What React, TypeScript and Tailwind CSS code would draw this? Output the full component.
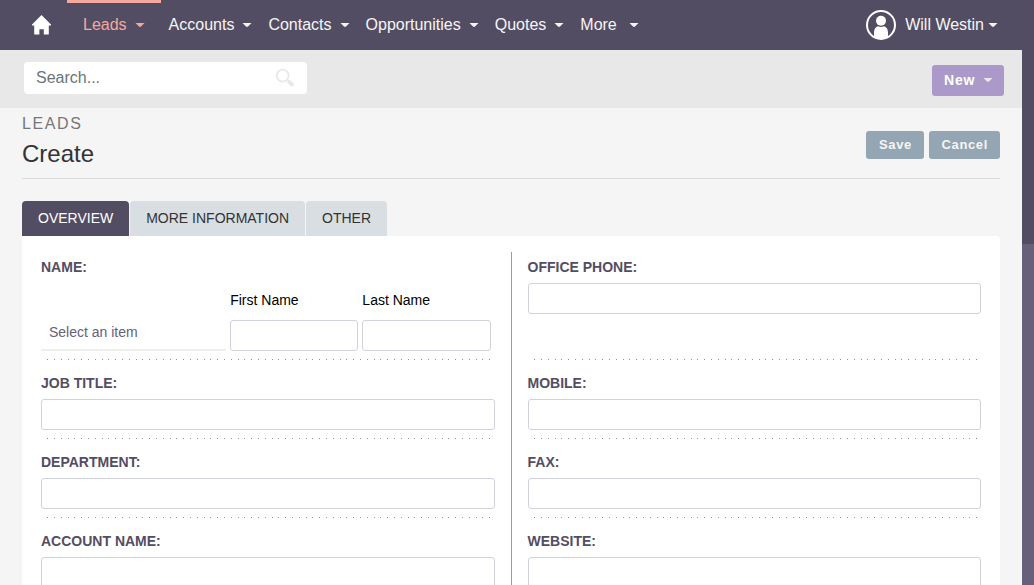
import React from "react";

const FONT = "font-['Liberation_Sans',Arial,sans-serif]";

function Caret() {
  return (
    <svg viewBox="0 0 10 4" className="h-1 w-[10px] shrink-0" fill="currentColor" aria-hidden="true">
      <path d="M.5 0h9L6 3.500Q5 4.400 4 3.500z" />
    </svg>
  );
}

function HomeIcon() {
  return (
    <svg viewBox="0 0 20 20" className="h-5 w-5" fill="currentColor" aria-hidden="true">
      <path d="M10.500 0L20 9.500v.9h-2.200V19.500h-5v-5.300H8.400v5.300H3.200v-9.100H1v-.9z" />
    </svg>
  );
}

function UserIcon() {
  return (
    <svg viewBox="0 0 30 30" className="h-[30px] w-[30px]" aria-hidden="true">
      <circle cx="15" cy="15" r="14" fill="none" stroke="#fff" strokeWidth="2" />
      <circle cx="15" cy="10.800" r="5" fill="#fff" />
      <path fill="#fff" d="M8 27v-4.500C8 19 9.800 16.800 12 16.300q3 1.200 6 0c2.200.5 4 2.700 4 6.200V27q-3 2-7 2t-7-2z" />
    </svg>
  );
}

function SearchIcon() {
  return (
    <svg viewBox="0 0 20 20" className="h-5 w-5" fill="none" stroke="#e8e8e8" aria-hidden="true">
      <circle cx="7.700" cy="7.700" r="6" strokeWidth="1.800" />
      <path d="M14 13.800l3 2.700" strokeWidth="4" strokeLinecap="round" />
    </svg>
  );
}

const MENUS = ["Accounts", "Contacts", "Opportunities", "Quotes"];

function NavBar() {
  return (
    <header className="flex h-[50px] items-stretch bg-[#534d64] text-base text-[#f5f5f5]">
      <a href="#home" aria-label="Home" className="flex w-[67px] items-center pl-[31px] text-white">
        <HomeIcon />
      </a>
      <nav className="flex items-stretch">
        <a
          href="#leads"
          className="mr-2 flex items-center gap-2 border-t-[3px] border-[#f4a99f] px-4 pb-[3px] text-[#f4a99f]"
        >
          Leads <Caret />
        </a>
        <div className="flex items-center gap-4">
          {MENUS.map((name) => (
            <a key={name} href={"#" + name.toLowerCase()} className="flex items-center gap-2">
              {name} <Caret />
            </a>
          ))}
          <a href="#more" className="flex items-center gap-3">
            More <Caret />
          </a>
        </div>
      </nav>
      <button type="button" className="mr-9 ml-auto flex items-center">
        <UserIcon />
        <span className="mr-1 ml-[9px]">Will Westin</span>
        <Caret />
      </button>
    </header>
  );
}

function Toolbar() {
  return (
    <div className="flex h-[58px] items-center justify-between bg-[#e8e8e8] pr-[18px] pl-6">
      <form className="mb-0.5 flex h-8 w-[283px] items-center rounded bg-white pr-3">
        <input
          type="search"
          aria-label="Search"
          placeholder="Search..."
          className="min-w-0 flex-1 bg-transparent pl-3 text-base leading-5 outline-none placeholder:text-[#6b747d]"
        />
        <button type="button" aria-label="Run search">
          <SearchIcon />
        </button>
      </form>
      <button
        type="button"
        className="mt-0.5 flex h-[31px] items-center gap-2 rounded-[3px] bg-[#ab9ac9] pr-[11px] pl-3 text-sm font-bold tracking-wider text-white"
      >
        New
        <span className="text-[#e8e8e8]">
          <Caret />
        </span>
      </button>
    </div>
  );
}

function ActionButton({ children }: { children: React.ReactNode }) {
  return (
    <button
      type="button"
      className="h-7 min-w-[58px] rounded-[3px] bg-[#94a5b3] px-3 text-[13px] font-bold tracking-wider text-[#f5f5f5]"
    >
      {children}
    </button>
  );
}

function DottedLine() {
  return (
    <div className="mr-1 h-px bg-[linear-gradient(to_right,transparent_6px,#888_6px,#888_7px,transparent_7px,transparent_13px,#999_13px,#999_14px,transparent_14px,transparent_20px,#999_20px,#999_21px,transparent_21px,transparent_27px,#999_27px,#999_28px,transparent_28px,transparent_33px,#999_33px)] bg-[length:34px_1px]" />
  );
}

const LABEL = "block text-sm leading-5 font-bold text-[#534d64]";
const INPUT = "block h-[31px] w-full min-w-0 rounded-[3px] border border-[#cfd2db] bg-white px-2 text-sm outline-none";

function Field({ id, label }: { id: string; label: string }) {
  return (
    <>
      <div className="pt-[13px] pb-2">
        <label htmlFor={id} className={LABEL + " mb-1.5"}>
          {label}
        </label>
        <input id={id} type="text" className={INPUT} />
      </div>
      <DottedLine />
    </>
  );
}

function NameField() {
  return (
    <>
      <div className="h-[107px] pt-[5px] pb-2">
        <label htmlFor="salutation" className={LABEL}>
          NAME:
        </label>
        <div className="mt-[13px] mr-1 grid grid-cols-[185fr_128fr_128fr] items-end gap-1 text-sm">
          <select
            id="salutation"
            className="h-[31px] w-full appearance-none border-b-2 border-[#eee] bg-white px-2 pb-1.5 leading-5 text-[#66607a] outline-none"
          >
            <option>Select an item</option>
          </select>
          <div>
            <label htmlFor="first" className="mb-2.5 block leading-5 text-black">
              First Name
            </label>
            <input id="first" type="text" className={INPUT} />
          </div>
          <div>
            <label htmlFor="last" className="mb-2.5 block leading-5 text-black">
              Last Name
            </label>
            <input id="last" type="text" className={INPUT} />
          </div>
        </div>
      </div>
      <DottedLine />
    </>
  );
}

function OfficePhoneField() {
  return (
    <>
      <div className="h-[107px] pt-[5px]">
        <label htmlFor="office" className={LABEL + " mb-1.5"}>
          OFFICE PHONE:
        </label>
        <input id="office" type="text" className={INPUT} />
      </div>
      <DottedLine />
    </>
  );
}

const TAB = "h-[35px] rounded-t px-4 pb-0.5 text-sm";

export default function App() {
  return (
    <div className={"flex h-screen flex-col overflow-hidden bg-[#534d64] " + FONT}>
      <div className="relative flex min-h-0 flex-1">
        <div className="min-w-0 flex-1 bg-[#f5f5f5]">
          <div className="-mr-3">
            <NavBar />
          </div>
          <Toolbar />
          <main className="px-[22px]">
            <div className="flex h-[71px] items-start justify-between border-b border-[#dcdcdc]">
              <div>
                <p className="pt-1 text-base leading-6 tracking-widest text-[#777]">LEADS</p>
                <h1 className="pt-0.5 text-2xl leading-8 text-[#333]">Create</h1>
              </div>
              <div className="mt-[23px] flex gap-[5px]">
                <ActionButton>Save</ActionButton>
                <ActionButton>Cancel</ActionButton>
              </div>
            </div>
            <div role="tablist" className="mt-[22px] flex gap-px">
              <button role="tab" aria-selected="true" className={TAB + " bg-[#534d64] text-white"}>
                OVERVIEW
              </button>
              <button role="tab" aria-selected="false" className={TAB + " bg-[#d8dee2] text-[#333]"}>
                MORE INFORMATION
              </button>
              <button role="tab" aria-selected="false" className={TAB + " bg-[#d8dee2] text-[#333]"}>
                OTHER
              </button>
            </div>
            <form className="flex rounded-tr bg-white px-[19px] pt-4">
              <div className="min-w-0 flex-1">
                <NameField />
                <Field id="title" label="JOB TITLE:" />
                <Field id="department" label="DEPARTMENT:" />
                <Field id="account" label="ACCOUNT NAME:" />
              </div>
              <div className="mx-4 w-px bg-[#94a0ab]" />
              <div className="min-w-0 flex-1">
                <OfficePhoneField />
                <Field id="mobile" label="MOBILE:" />
                <Field id="fax" label="FAX:" />
                <Field id="website" label="WEBSITE:" />
              </div>
            </form>
          </main>
        </div>
        <div className="flex w-3 flex-col bg-[#66607a]" aria-hidden="true">
          <div className="h-5/12 bg-[#534d64]" />
        </div>
      </div>
    </div>
  );
}
